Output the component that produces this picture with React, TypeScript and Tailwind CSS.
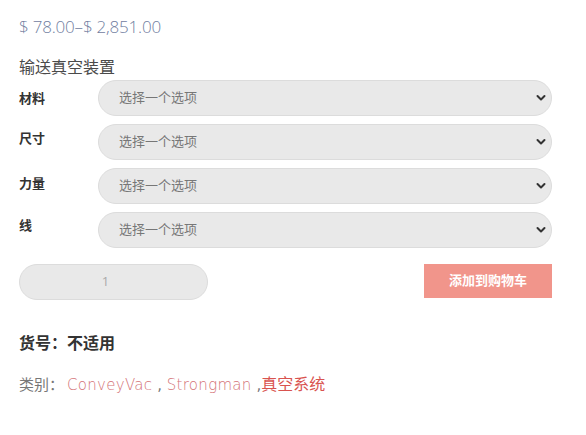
import React from 'react';

const fields = [
  { label: '材料', pt: 'pt-[9px]' },
  { label: '尺寸', pt: 'pt-[5px]' },
  { label: '力量', pt: 'pt-[6px]' },
  { label: '线', pt: 'pt-[4px]' },
];

const font = { fontFamily: '"Open Sans", "Noto Sans CJK SC", sans-serif' };

function Chevron() {
  return (
    <svg width="10" height="7" viewBox="0 0 10 7" className="absolute right-[6px] top-1/2 -translate-y-1/2">
      <path d="M1.5 1.5 L5 5 L8.5 1.5" fill="none" stroke="#333" strokeWidth="2" strokeLinecap="round" strokeLinejoin="round" />
    </svg>
  );
}

export default function App() {
  return (
    <div className="w-[586px] h-[435px] bg-white" style={font}>
      <div className="pl-[19px] pr-[34px] pt-[15px]">
        <p className="text-[17px] leading-[24px] text-[#72809f] font-light tracking-[-0.2px]">$ 78.00–$ 2,851.00</p>

        <p className="mt-[17px] text-[16px] leading-[22px] text-[#4a4a4a]">输送真空装置</p>

        <div className="flex flex-col gap-[8px] mt-[2px]">
          {fields.map((f) => (
            <div key={f.label} className="flex items-start">
              <span className={`w-[79px] ${f.pt} text-[13px] leading-[18px] font-bold text-[#333]`}>{f.label}</span>
              <div className="relative flex-1">
                <div className="h-[36px] rounded-full bg-[#e9e9e9] border border-[#dcdcdc] flex items-center pl-[20px] text-[13px] text-[#777]">
                  选择一个选项
                </div>
                <Chevron />
              </div>
            </div>
          ))}
        </div>

        <div className="flex items-start justify-between mt-[16px]">
          <div className="w-[189px] h-[36px] rounded-full bg-[#e9e9e9] border border-[#dcdcdc] flex items-center justify-center pr-[16px] text-[13px] text-[#aaa]">
            1
          </div>
          <button className="w-[128px] h-[34px] bg-[#f1958b] text-white text-[13px] font-bold">添加到购物车</button>
        </div>

        <p className="mt-[32px] text-[16px] leading-[22px] font-bold text-[#333]">货号：不适用</p>

        <p className="mt-[19px] text-[15px] leading-[22px] text-[#777]">
          类别：
          <span className="ml-[3px] text-[#d47377] font-['DejaVu_Sans',sans-serif] font-light tracking-[0.3px]">ConveyVac</span>
          <span className="font-['DejaVu_Sans',sans-serif]"> , </span>
          <span className="text-[#d47377] font-['DejaVu_Sans',sans-serif] font-light tracking-[0.3px]">Strongman</span>
          <span className="font-['DejaVu_Sans',sans-serif]"> ,</span>
          <span className="text-[16px] text-[#d9534f]">真空系统</span>
        </p>
      </div>
    </div>
  );
}
